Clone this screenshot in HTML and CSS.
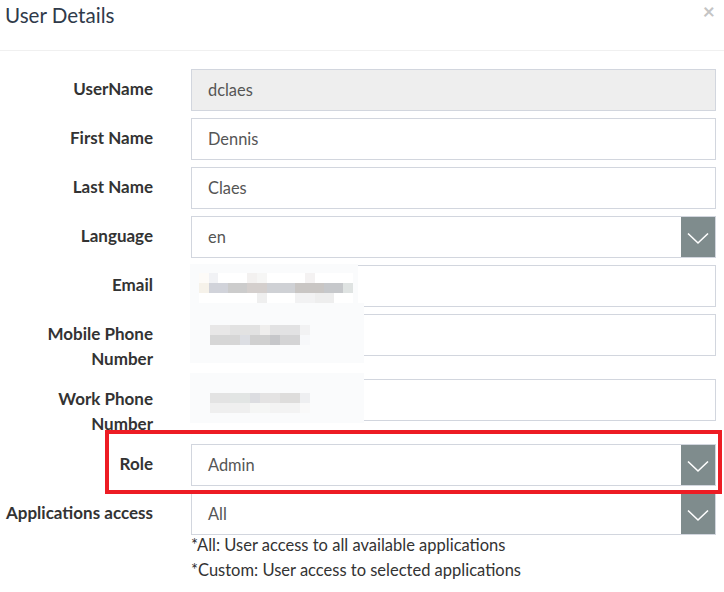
FILE: index.html
```html
<!DOCTYPE html>
<html>
<head>
<meta charset="utf-8">
<link rel="stylesheet" href="styles.css">
</head>
<body>
<div class="modal">
  <div class="header">
    <h4 class="title">User Details</h4>
    <span class="close">×</span>
  </div>
  <div class="body">
    <div class="row">
      <label class="label">UserName</label>
      <div class="field"><div class="input disabled">dclaes</div></div>
    </div>
    <div class="row">
      <label class="label">First Name</label>
      <div class="field"><div class="input">Dennis</div></div>
    </div>
    <div class="row">
      <label class="label">Last Name</label>
      <div class="field"><div class="input">Claes</div></div>
    </div>
    <div class="row">
      <label class="label">Language</label>
      <div class="field"><div class="input select"><span>en</span><span class="caret-box"><svg width="34" height="40" viewBox="0 0 34 40"><polyline points="7,16.5 17,26 27,16.5" fill="none" stroke="#fff" stroke-width="1.6"/></svg></span></div></div>
    </div>
    <div class="row">
      <label class="label">Email</label>
      <div class="field">
        <div class="input"></div>
        <div class="blur blur-email">
          <div class="px px-email-1"></div>
          <div class="px px-email-2"></div>
          <div class="px px-email-3"></div>
        </div>
      </div>
    </div>
    <div class="row">
      <label class="label">Mobile Phone<br>Number</label>
      <div class="field">
        <div class="input"></div>
        <div class="blur blur-mobile">
          <div class="px px-m1"></div>
          <div class="px px-m2"></div>
        </div>
      </div>
    </div>
    <div class="row">
      <label class="label">Work Phone<br>Number</label>
      <div class="field">
        <div class="input"></div>
        <div class="blur blur-work">
          <div class="px px-w1"></div>
          <div class="px px-w2"></div>
        </div>
      </div>
    </div>
    <div class="row">
      <label class="label">Role</label>
      <div class="field"><div class="input select"><span>Admin</span><span class="caret-box"><svg width="34" height="40" viewBox="0 0 34 40"><polyline points="7,16.5 17,26 27,16.5" fill="none" stroke="#fff" stroke-width="1.6"/></svg></span></div></div>
    </div>
    <div class="row">
      <label class="label">Applications access</label>
      <div class="field">
        <div class="input select"><span>All</span><span class="caret-box"><svg width="34" height="40" viewBox="0 0 34 40"><polyline points="7,16.5 17,26 27,16.5" fill="none" stroke="#fff" stroke-width="1.6"/></svg></span></div>
        <p class="help">*All: User access to all available applications<br>*Custom: User access to selected applications</p>
      </div>
    </div>
  </div>
  <div class="highlight"></div>
</div>
</body>
</html>
```

FILE: styles.css
```css
html, body {
  margin: 0;
  padding: 0;
  background: #fff;
}
body {
  font-family: Lato, "Source Sans Pro", "Open Sans", sans-serif;
  font-size: 16px;
  color: #333;
  width: 724px;
  height: 592px;
  overflow: hidden;
}
.modal {
  position: relative;
  width: 724px;
}
.header {
  display: flex;
  justify-content: space-between;
  align-items: flex-start;
  height: 50px;
  border-bottom: 1px solid #f0f0f0;
  padding: 0 9px 0 5px;
}
.title {
  margin: 1px 0 0 0;
  font-size: 20.6px;
  font-weight: normal;
  line-height: 28px;
  color: #2f3a4a;
}
.close {
  margin-top: -1px;
  font-size: 21px;
  font-weight: bold;
  line-height: 24px;
  color: #c4c4c4;
}
.body {
  padding-top: 18px;
}
.row {
  display: flex;
  margin-bottom: 7px;
}
.label {
  width: 153px;
  flex: none;
  text-align: right;
  font-weight: bold;
  font-size: 17px;
  line-height: 24.5px;
  padding: 8px 0 1px 0;
  color: #333;
  white-space: nowrap;
}
.field {
  position: relative;
  margin-left: 38px;
  width: 525px;
}
.input {
  box-sizing: border-box;
  height: 42px;
  border: 1px solid #d2d6de;
  padding: 0 16px;
  line-height: 40px;
  font-size: 16.4px;
  color: #555;
  background: #fff;
}
.input.disabled {
  background: #eee;
}
.input.select {
  display: flex;
  justify-content: space-between;
  padding-right: 0;
}
.caret-box {
  display: block;
  width: 34px;
  height: 40px;
  background: #7f8c8d;
}
.caret-box svg {
  display: block;
}
.help {
  margin: -2px 0 0 0;
  font-size: 16.5px;
  line-height: 25px;
  color: #333;
}
.blur {
  position: absolute;
  background: #fafbfc;
}
.blur-email {
  left: -1px;
  top: -1px;
  width: 168px;
  height: 46px;
}
.blur-mobile {
  left: -1px;
  top: -11px;
  width: 174px;
  height: 60px;
}
.blur-work {
  left: -1px;
  top: -6px;
  width: 174px;
  height: 50px;
}
.px {
  position: absolute;
  height: 10px;
}
.px-email-1 {
  left: 9px; top: 9px; width: 154px;
  background: linear-gradient(to right, #fdfbf8 0 10px, #f1f2f5 10px 19px, #fff 19px 48px, #f3f1f0 48px 58px, #f6f6f5 58px 68px, #fff 68px 106px, #f4f2f2 106px 116px, #fff 116px);
}
.px-email-2 {
  left: 9px; top: 19px; width: 154px;
  background: linear-gradient(to right, #f6f2ea 0 10px, #d1d3da 10px 29px, #ccc 29px 48px, #d4cfcd 48px 68px, #cfd1d5 68px 96px, #c9c6c4 96px 125px, #c6c8cb 125px 144px, #dfe3e2 144px 154px);
}
.px-email-3 {
  left: 9px; top: 29px; width: 154px;
  background: linear-gradient(to right, #fff 0 58px, #efefef 58px 68px, #fff 68px 96px, #f2f2f3 96px 116px, #eeeeee 116px 135px, #fff 135px);
}
.px-m1 {
  left: 20px; top: 22px; width: 100px;
  background: linear-gradient(to right, #e8e7e7 0 20px, #e2e2e2 20px 50px, #efeeed 50px 60px, #e2e2e3 60px 90px, #f2f2f3 90px 100px);
}
.px-m2 {
  left: 20px; top: 32px; width: 100px;
  background: linear-gradient(to right, #d6d6d6 0 30px, #dcdee3 30px 40px, #d0d0d0 40px 60px, #c6c7ca 60px 70px, #d4d4d5 70px 90px, #f7f8fa 90px 100px);
}
.px-w1 {
  left: 20px; top: 20px; width: 100px;
  background: linear-gradient(to right, #e3e3e3 0 20px, #e2e5e4 20px 40px, #dcdde1 40px 50px, #e4e3e3 50px 70px, #dedddc 70px 90px, #eeeff1 90px 100px);
}
.px-w2 {
  left: 20px; top: 30px; width: 100px;
  background: linear-gradient(to right, #efefef 0 40px, #f5f6f5 40px 60px, #f3f3f3 60px 90px, #f9f9f9 90px 100px);
}
.highlight {
  position: absolute;
  left: 105px;
  top: 430px;
  width: 609px;
  height: 56px;
  border: 4px solid #ed1c24;
}
```
